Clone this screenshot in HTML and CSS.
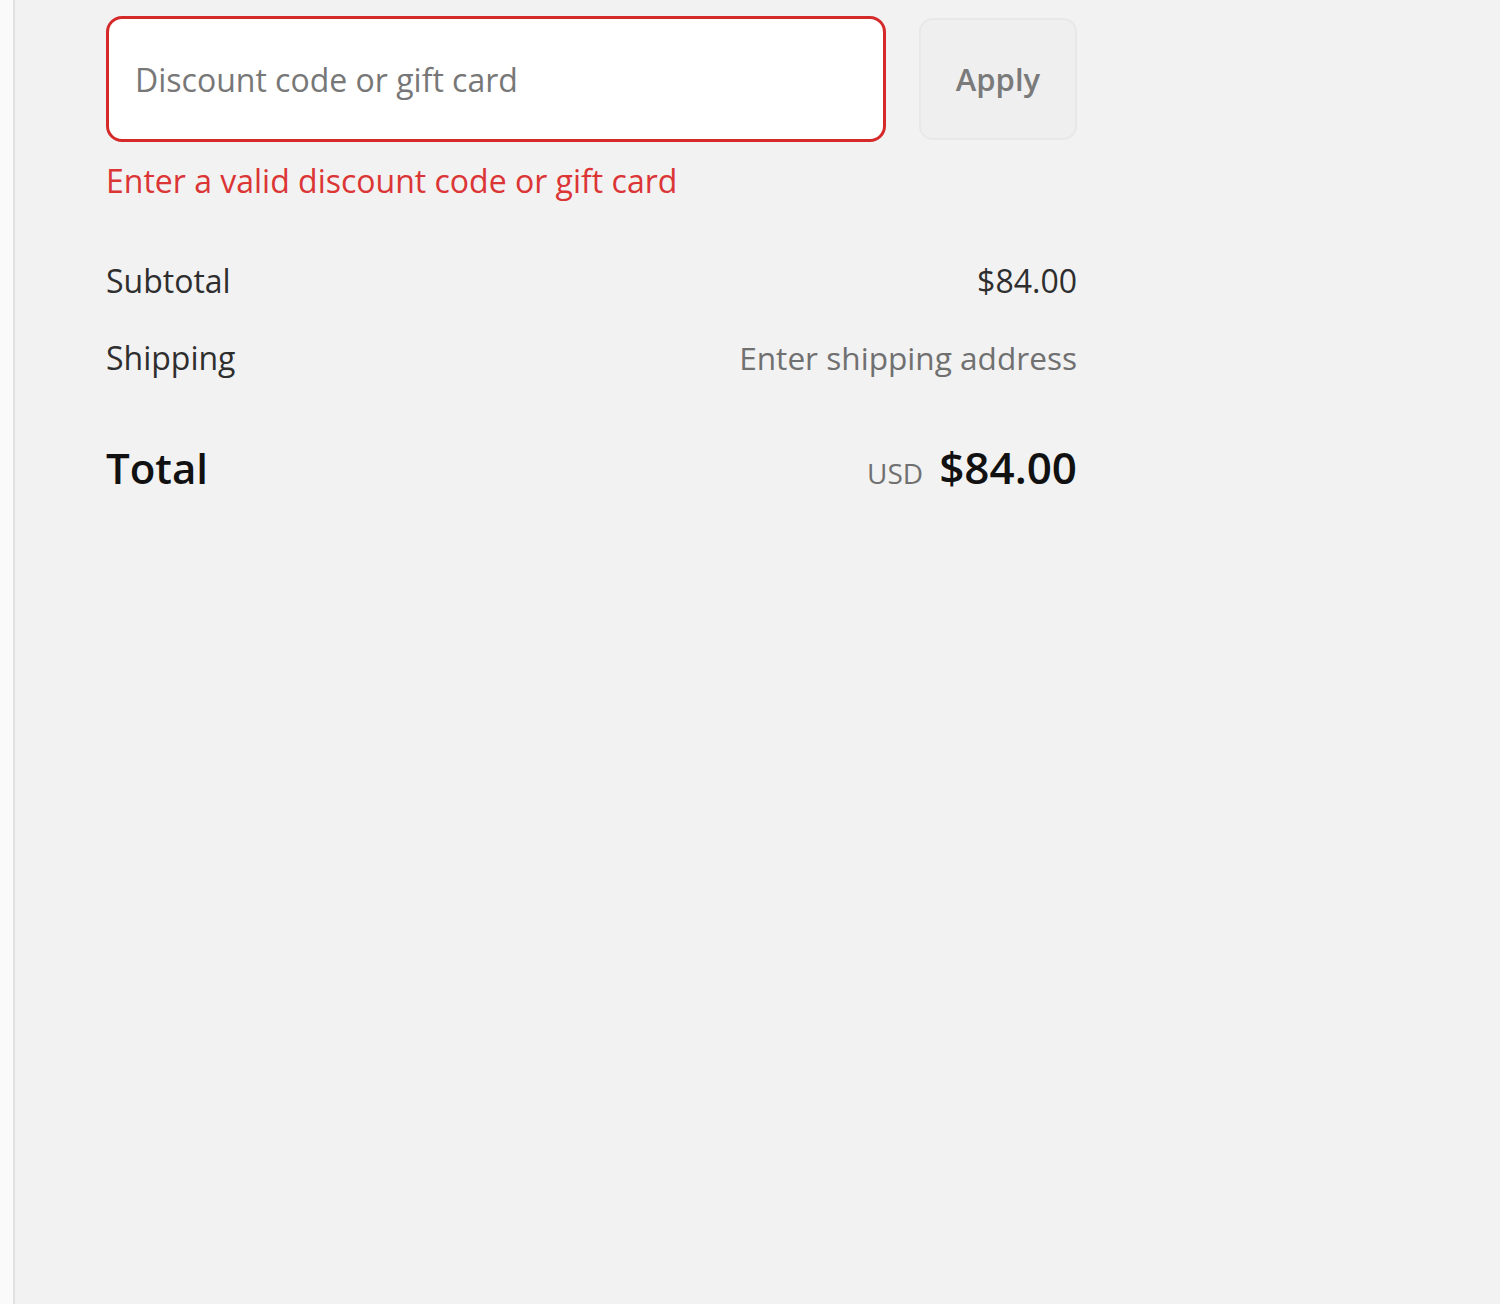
FILE: index.html
```html
<!DOCTYPE html>
<html lang="en">
<head>
<meta charset="utf-8">
<title>Order summary</title>
<link rel="stylesheet" href="styles.css">
</head>
<body>
<div class="page">
  <div class="edge"></div>
  <main class="summary">
    <div class="discount">
      <div class="field">
        <input class="code-input" type="text" placeholder="Discount code or gift card">
      </div>
      <button class="apply" type="button">Apply</button>
    </div>
    <p class="error">Enter a valid discount code or gift card</p>
    <div class="lines">
      <div class="line">
        <span class="label">Subtotal</span>
        <span class="value">$84.00</span>
      </div>
      <div class="line">
        <span class="label">Shipping</span>
        <span class="value muted">Enter shipping address</span>
      </div>
      <div class="line total">
        <span class="total-label">Total</span>
        <span class="total-value"><span class="currency">USD</span><strong class="amount">$84.00</strong></span>
      </div>
    </div>
  </main>
</div>
</body>
</html>
```

FILE: styles.css
```css
* { box-sizing: border-box; }
html, body {
  margin: 0;
  padding: 0;
  height: 100%;
  background: #f2f2f2;
  font-family: "Open Sans", "Noto Sans", "Liberation Sans", sans-serif;
  color: #333333;
}
.page {
  display: flex;
  min-height: 1304px;
}
.edge {
  width: 15px;
  flex: none;
  background: #fafafa;
  border-right: 2px solid #e1e1e1;
}
.summary {
  width: 971px;
  margin-left: 91px;
  padding-top: 16px;
}
.discount {
  display: flex;
  align-items: center;
  gap: 33px;
}
.field { flex: 1; }
.code-input {
  display: block;
  width: 100%;
  height: 126px;
  border: 3px solid #d42a2a;
  border-radius: 16px;
  background: #ffffff;
  padding: 0 26px;
  font-family: inherit;
  font-size: 32px;
  color: #333;
  outline: none;
}
.code-input::placeholder { color: #777777; }
.apply {
  width: 158px;
  height: 122px;
  flex: none;
  border: 2px solid #e8e8e8;
  border-radius: 14px;
  background: #efefef;
  font-family: inherit;
  font-size: 31px;
  font-weight: 600;
  color: #7a7a7a;
}
.error {
  margin: 20px 0 0;
  font-size: 32px;
  line-height: 38px;
  color: #db3535;
}
.lines {
  margin-top: 61px;
}
.line {
  display: flex;
  justify-content: space-between;
  align-items: baseline;
  font-size: 32px;
  line-height: 40px;
  margin-bottom: 37px;
}
.label { color: #2e2e2e; }
.value { color: #2e2e2e; }
.muted { color: #707070; font-size: 31.6px; }
.total {
  margin-top: 69px;
  align-items: baseline;
}
.total-label {
  font-size: 42px;
  font-weight: 600;
  color: #111;
}
.total-value {
  display: flex;
  align-items: baseline;
  gap: 16px;
}
.currency {
  font-size: 28px;
  color: #707070;
}
.amount {
  font-size: 44px;
  font-weight: 600;
  color: #111;
}
```
